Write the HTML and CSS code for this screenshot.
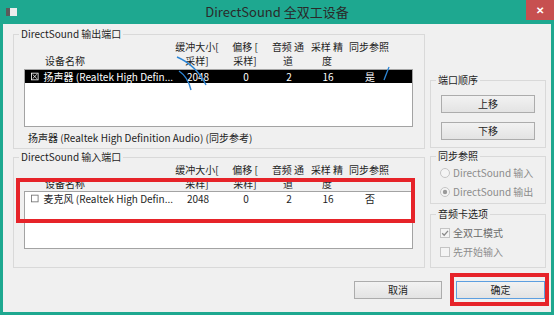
FILE: index.html
```html
<!DOCTYPE html>
<html lang="zh-CN">
<head>
  <meta charset="UTF-8">
  <meta name="viewport" content="width=device-width, initial-scale=1.0">
  <title>DirectSound 全双工设备</title>
  <link rel="stylesheet" href="styles.css">
</head>
<body>
  <div class="window">
    <header class="titlebar">
      <span class="app-icon"></span>
      <span class="title">DirectSound 全双工设备</span>
      <span class="close-btn">✕</span>
    </header>

    <div class="client">
      <div class="panes">
        <div class="left-pane">
          <fieldset class="group port-group out-port">
            <legend>DirectSound 输出端口</legend>
            <div class="cols list-head">
              <div class="hname"><span>&nbsp;</span><span>设备名称</span></div>
              <div><span>缓冲大小[</span><span>采样]</span></div>
              <div><span>偏移 [</span><span>采样]</span></div>
              <div><span>音频 通</span><span>道</span></div>
              <div><span>采样 精</span><span>度</span></div>
              <div><span>同步参照</span><span>&nbsp;</span></div>
            </div>
            <div class="listbox">
              <div class="cols row selected">
                <div class="cname">
                  <svg class="box" width="9" height="9" viewBox="0 0 9 9"><rect x="0.5" y="0.5" width="8" height="8" fill="none" stroke="#fff"/><path d="M2 2 L7 7 M7 2 L2 7" stroke="#fff" stroke-width="1"/></svg>
                  <span>扬声器 (Realtek High Defin...</span>
                </div>
                <div>2048</div>
                <div>0</div>
                <div>2</div>
                <div>16</div>
                <div>是</div>
              </div>
            </div>
            <div class="sync-note">扬声器 (Realtek High Definition Audio) (同步参考)</div>
          </fieldset>

          <fieldset class="group port-group in-port">
            <legend>DirectSound 输入端口</legend>
            <div class="cols list-head">
              <div class="hname"><span>&nbsp;</span><span>设备名称</span></div>
              <div><span>缓冲大小[</span><span>采样]</span></div>
              <div><span>偏移 [</span><span>采样]</span></div>
              <div><span>音频 通</span><span>道</span></div>
              <div><span>采样 精</span><span>度</span></div>
              <div><span>同步参照</span><span>&nbsp;</span></div>
            </div>
            <div class="listbox">
              <div class="cols row">
                <div class="cname">
                  <svg class="box" width="9" height="9" viewBox="0 0 9 9"><rect x="0.5" y="0.5" width="8" height="8" fill="#fff" stroke="#707070"/></svg>
                  <span>麦克风 (Realtek High Defin...</span>
                </div>
                <div>2048</div>
                <div>0</div>
                <div>2</div>
                <div>16</div>
                <div>否</div>
              </div>
            </div>
          </fieldset>
        </div>

        <div class="right-pane">
          <fieldset class="group side-group order-group">
            <legend>端口顺序</legend>
            <button class="btn side-btn">上移</button>
            <button class="btn side-btn">下移</button>
          </fieldset>

          <fieldset class="group side-group sync-group">
            <legend>同步参照</legend>
            <div class="option disabled">
              <svg width="10" height="10" viewBox="0 0 10 10"><circle cx="5" cy="5" r="4.5" fill="#f4f4f4" stroke="#c4c4c4"/></svg>
              <span>DirectSound 输入</span>
            </div>
            <div class="option disabled">
              <svg width="10" height="10" viewBox="0 0 10 10"><circle cx="5" cy="5" r="4.5" fill="#f4f4f4" stroke="#c4c4c4"/><circle cx="5" cy="5" r="2.2" fill="#9a9a9a"/></svg>
              <span>DirectSound 输出</span>
            </div>
          </fieldset>

          <fieldset class="group side-group card-group">
            <legend>音频卡选项</legend>
            <div class="option half">
              <svg width="10" height="10" viewBox="0 0 10 10"><rect x="0.5" y="0.5" width="9" height="9" fill="#f4f4f4" stroke="#c4c4c4"/><path d="M2.2 5.2 L4.2 7.2 L8 2.8" fill="none" stroke="#8a8a8a" stroke-width="1.3"/></svg>
              <span>全双工模式</span>
            </div>
            <div class="option disabled">
              <svg width="10" height="10" viewBox="0 0 10 10"><rect x="0.5" y="0.5" width="9" height="9" fill="#f4f4f4" stroke="#c4c4c4"/></svg>
              <span>先开始输入</span>
            </div>
          </fieldset>
        </div>
      </div>

      <div class="footer">
        <button class="btn foot-btn">取消</button>
        <button class="btn foot-btn btn-default">确定</button>
      </div>
    </div>

    <!-- red annotation frames drawn over the dialog -->
    <div class="mark mark-list"></div>
    <div class="mark mark-ok"></div>
    <svg class="pen-marks" width="554" height="315" viewBox="0 0 554 315">
      <path d="M177 57 Q196 65 206 85" fill="none" stroke="#2d86d6" stroke-width="1.4"/>
      <path d="M179 71 Q188 77 191 90" fill="none" stroke="#2d86d6" stroke-width="1.4"/>
      <path d="M384 80 L389 67" fill="none" stroke="#2d86d6" stroke-width="1.3"/>
    </svg>
  </div>
</body>
</html>
```

FILE: styles.css
```css
body {
  margin: 0;
  font-family: "Noto Sans CJK SC", "Noto Sans", sans-serif;
  font-size: 10px;
  color: #1e1e1e;
}

.window {
  position: relative;
  width: 554px;
  height: 315px;
  background: #1ea890;
  display: flex;
  flex-direction: column;
  overflow: hidden;
}

.titlebar {
  height: 24px;
  display: grid;
  grid-template-columns: 1fr auto 1fr;
  align-items: center;
}

.app-icon {
  margin-left: 6px;
  width: 7px;
  height: 8px;
  background: #ececec;
  border-left: 4px solid #5b5b5b;
}

.title {
  font-size: 13px;
  line-height: 24px;
  color: #2a2a2a;
  white-space: nowrap;
}

.close-btn {
  justify-self: end;
  align-self: start;
  width: 28px;
  height: 20px;
  background: #c75050;
  color: #fff;
  font-size: 10px;
  font-weight: bold;
  line-height: 20px;
  text-align: center;
}

.client {
  flex: 1;
  margin: 0 3px 3px;
  background: #f0f0f0;
  padding: 4px 5px 0 10px;
}

.panes {
  display: flex;
  gap: 5px;
  align-items: flex-start;
}

.group {
  margin: 0;
  padding: 0;
  min-width: 0;
  border: 1px solid #d9d9d9;
}

.group legend {
  margin-left: 5px;
  padding: 0 2px;
  line-height: 12px;
  color: #1e1e1e;
}

.left-pane {
  width: 412px;
}

.port-group {
  padding: 0 11px 4px 10px;
}

.port-group legend,
.order-group legend {
  margin-left: -5px;
}

.in-port {
  margin-top: 2px;
  padding-bottom: 18px;
}

.cols {
  display: grid;
  grid-template-columns: 148px 50px 46px 40px 38px 46px;
}

.cols > div {
  text-align: center;
  white-space: nowrap;
}

.list-head {
  line-height: 14px;
}

.list-head span {
  display: block;
}

.list-head .hname {
  text-align: left;
  padding-left: 21px;
}

.listbox {
  margin-top: 1px;
  height: 58px;
  box-sizing: border-box;
  border: 1px solid #a3a3a3;
  background: #fff;
}

.in-port .listbox {
  margin-top: 0;
}

.row {
  height: 13px;
  line-height: 13px;
}

.row.selected {
  background: #000;
  color: #fff;
}

.row .cname {
  display: flex;
  align-items: center;
  gap: 5px;
  padding-left: 6px;
  text-align: left;
}

.sync-note {
  margin: 4px 0 0 4px;
  line-height: 13px;
}

.right-pane {
  width: 116px;
  padding-top: 46px;
}

.order-group {
  padding: 0 10px 7px;
}

.btn {
  display: block;
  box-sizing: border-box;
  height: 18px;
  padding: 0;
  font-family: inherit;
  font-size: 10px;
  line-height: 16px;
  color: #1e1e1e;
  background: linear-gradient(#f2f2f2, #e3e3e3);
  border: 1px solid #acacac;
}

.side-btn {
  width: 100%;
  margin-top: 9px;
}

.sync-group {
  margin-top: 2px;
  padding-bottom: 4px;
}

.card-group {
  margin-top: 4px;
  padding-bottom: 8px;
}

.option {
  display: flex;
  align-items: center;
  gap: 3px;
  padding-left: 9px;
  height: 14px;
  line-height: 14px;
  margin-top: 5px;
}

.sync-group .option:first-of-type {
  margin-top: 4px;
}

.card-group .option:first-of-type {
  margin-top: 6px;
}

.option.disabled {
  color: #8c8c8c;
}

.option.half {
  color: #6a6a6a;
}

.footer {
  display: flex;
  justify-content: flex-end;
  gap: 14px;
  padding-top: 13px;
  padding-right: 1px;
}

.foot-btn {
  width: 88px;
}

.btn-default {
  width: 89px;
  border-color: #5d9fe0;
}

.mark {
  position: absolute;
  box-sizing: border-box;
  border: 4px solid #e62329;
}

.mark-list {
  left: 16px;
  top: 178px;
  width: 399px;
  height: 45px;
}

.mark-ok {
  left: 450px;
  top: 273px;
  width: 99px;
  height: 33px;
}

.pen-marks {
  position: absolute;
  left: 0;
  top: 0;
  pointer-events: none;
}
```
